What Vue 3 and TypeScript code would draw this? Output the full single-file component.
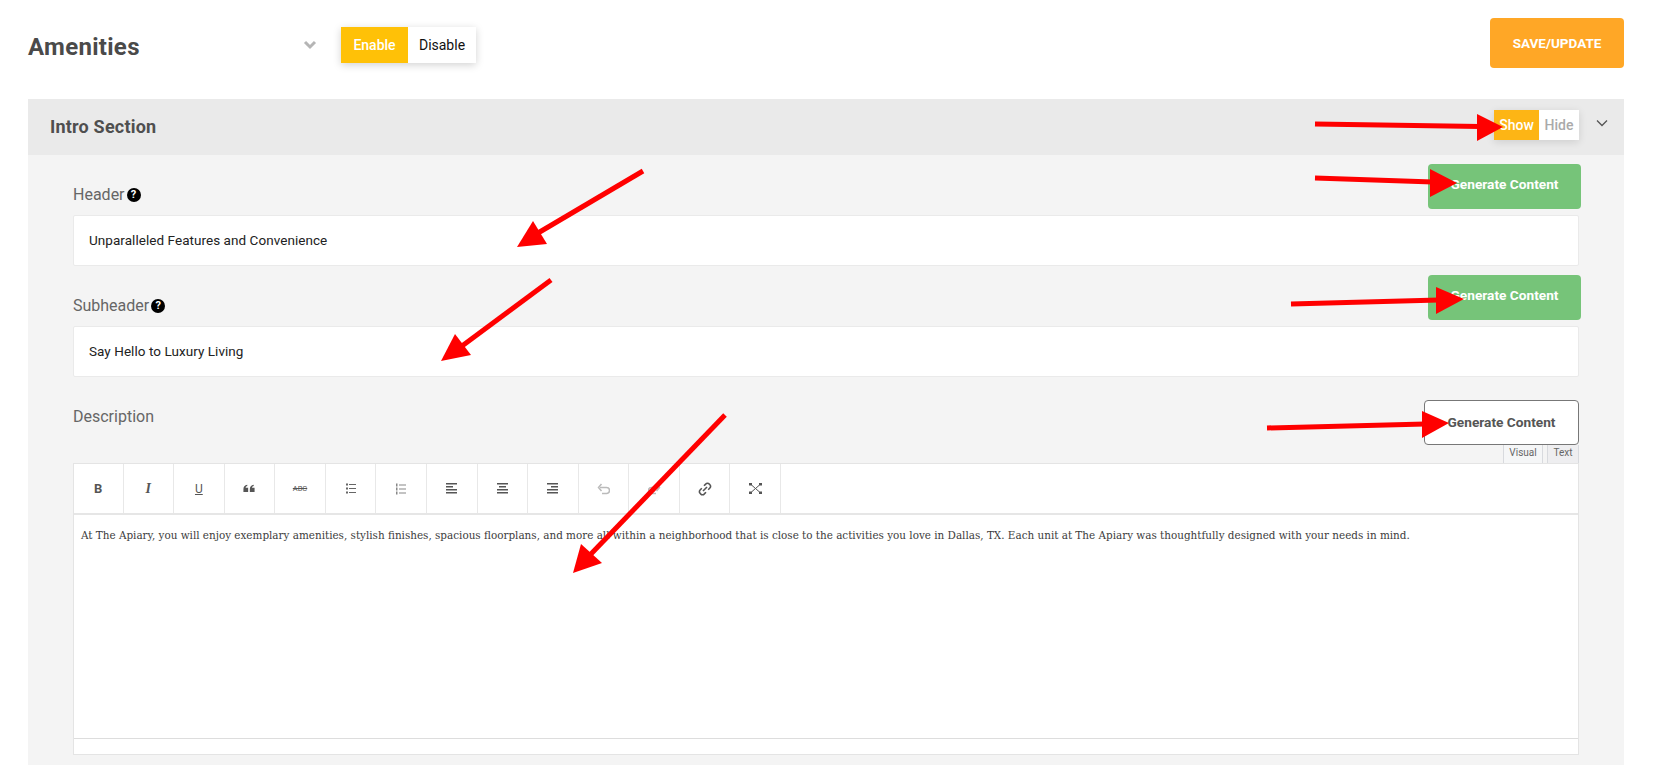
<template>
  <div class="page">
    <div class="topbar">
      <h1 class="title">Amenities</h1>
      <svg class="title-chevron" width="14" height="10" viewBox="0 0 14 10">
        <path d="M2 2l5 5 5-5" fill="none" stroke="#b5b5b5" stroke-width="3" />
      </svg>
      <div class="switch">
        <span class="switch-on">Enable</span>
        <span class="switch-off">Disable</span>
      </div>
      <button class="save-btn">SAVE/UPDATE</button>
    </div>

    <section class="panel">
      <header class="panel-head">
        <h2 class="panel-title">Intro Section</h2>
        <div class="show-hide">
          <span class="show">Show</span>
          <span class="hide">Hide</span>
        </div>
        <svg class="panel-chevron" width="12" height="8" viewBox="0 0 12 8">
          <path d="M1 1.5l5 5 5-5" fill="none" stroke="#555" stroke-width="1.3" />
        </svg>
      </header>

      <div class="panel-body">
        <div class="field-row">
          <label class="field-label">Header <span class="help">?</span></label>
          <button class="gen-btn">Generate Content</button>
        </div>
        <div class="text-input">Unparalleled Features and Convenience</div>

        <div class="field-row second">
          <label class="field-label">Subheader <span class="help">?</span></label>
          <button class="gen-btn">Generate Content</button>
        </div>
        <div class="text-input">Say Hello to Luxury Living</div>

        <div class="field-row third">
          <label class="field-label desc">Description</label>
          <button class="gen-btn outline">Generate Content</button>
        </div>
        <div class="tabs">
          <span class="tab visual">Visual</span>
          <span class="tab text">Text</span>
        </div>

        <div class="editor">
          <div class="toolbar">
            <span class="tool"><span class="t-bold">B</span></span>
            <span class="tool"><span class="t-italic">I</span></span>
            <span class="tool"><span class="t-under">U</span></span>
            <span class="tool">
              <svg width="12" height="9" viewBox="0 0 14 10"><path d="M0.500 9V5.500C0.500 3 2 1 5 0.500V2.200C3.800 2.500 3.200 3.200 3.100 4H6V9ZM8 9V5.500C8 3 9.500 1 12.500 0.500V2.200C11.300 2.500 10.700 3.200 10.600 4H13.500V9Z" fill="#555" /></svg>
            </span>
            <span class="tool"><span class="t-strike">ABC</span></span>
            <span class="tool">
              <svg width="10" height="11" viewBox="0 0 10 11" fill="#666"><rect y="0.500" width="2" height="2" /><rect y="4.500" width="2" height="2" /><rect y="8.500" width="2" height="2" /><rect x="3" y="1" width="7" height="1" /><rect x="3" y="5" width="7" height="1" /><rect x="3" y="9" width="7" height="1" /></svg>
            </span>
            <span class="tool">
              <svg width="10" height="12" viewBox="0 0 10 12" fill="#888"><rect y="0.500" width="1.500" height="3" /><rect y="4.500" width="1.500" height="3" /><rect y="8.500" width="1.500" height="3" /><rect x="3" y="1.500" width="7" height="1" /><rect x="3" y="5.500" width="7" height="1" /><rect x="3" y="9.500" width="7" height="1" /></svg>
            </span>
            <span class="tool">
              <svg width="11" height="11" viewBox="0 0 11 11" fill="#555"><rect width="11" height="1.500" /><rect y="3" width="7" height="1.500" /><rect y="6" width="11" height="1.500" /><rect y="9" width="11" height="1.500" /></svg>
            </span>
            <span class="tool">
              <svg width="11" height="11" viewBox="0 0 11 11" fill="#555"><rect width="11" height="1.500" /><rect x="2" y="3" width="7" height="1.500" /><rect y="6" width="11" height="1.500" /><rect y="9" width="11" height="1.500" /></svg>
            </span>
            <span class="tool">
              <svg width="11" height="11" viewBox="0 0 11 11" fill="#555"><rect width="11" height="1.500" /><rect x="4" y="3" width="7" height="1.500" /><rect y="6" width="11" height="1.500" /><rect y="9" width="11" height="1.500" /></svg>
            </span>
            <span class="tool">
              <svg width="13" height="12" viewBox="0 0 13 12" fill="none" stroke="#bbb" stroke-width="1.500"><path d="M3 4.500h6.500a2.800 2.800 0 0 1 0 6H5" /><path d="M4.500 1L1.500 4.500 4.500 8" /></svg>
            </span>
            <span class="tool">
              <svg width="13" height="12" viewBox="0 0 13 12" fill="none" stroke="#bbb" stroke-width="1.500"><path d="M10 4.500H3.500a2.800 2.800 0 0 0 0 6H8" /><path d="M8.500 1l3 3.500-3 3.500" /></svg>
            </span>
            <span class="tool">
              <svg width="14" height="14" viewBox="0 0 14 14" fill="none" stroke="#555" stroke-width="1.600"><path d="M6 3.800l1.700-1.700a2.300 2.300 0 0 1 3.600 0l.6.600a2.300 2.300 0 0 1 0 3.300L10.200 7.700" /><path d="M8 10.200l-1.700 1.700a2.300 2.300 0 0 1-3.600 0l-.6-.6a2.300 2.300 0 0 1 0-3.300L3.800 6.300" /><path d="M5 9l4-4" /></svg>
            </span>
            <span class="tool">
              <svg width="13" height="11" viewBox="0 0 13 11" fill="#555"><rect width="3" height="2.500" /><rect x="10" width="3" height="2.500" /><rect y="8.500" width="3" height="2.500" /><rect x="10" y="8.500" width="3" height="2.500" /><path d="M2.500 2l8 7M10.500 2l-8 7" stroke="#555" stroke-width="1" /></svg>
            </span>
          </div>
          <div class="editor-content">
            At The Apiary, you will enjoy exemplary amenities, stylish finishes, spacious floorplans, and more all within a neighborhood that is close to the activities you love in Dallas, TX. Each unit at The Apiary was thoughtfully designed with your needs in mind.
          </div>
          <div class="status-bar"></div>
        </div>
      </div>
    </section>

    <!-- red annotation arrows drawn over the screenshot -->
    <svg class="arrows" width="1654" height="765" viewBox="0 0 1654 765">
      <g v-for="(a, i) in arrows" :key="i">
        <line :x1="a.x1" :y1="a.y1" :x2="a.x2" :y2="a.y2" stroke="#ff0000" stroke-width="5" />
        <polygon :points="a.head" fill="#ff0000" />
      </g>
    </svg>
  </div>
</template>

<script setup lang="ts">
interface Arrow {
  x1: number
  y1: number
  x2: number
  y2: number
  head: string
}

const arrows: Arrow[] = [
  { x1: 1315, y1: 124, x2: 1480, y2: 126.5, head: '1477,114 1503,127 1477,141' },
  { x1: 1315, y1: 178, x2: 1433, y2: 182, head: '1430,169 1457,183 1430,197' },
  { x1: 1291, y1: 304, x2: 1439, y2: 300, head: '1436,287 1464,299 1436,314' },
  { x1: 1267, y1: 428, x2: 1425, y2: 424, head: '1422,411 1449,423 1422,438' },
  { x1: 643, y1: 171, x2: 538, y2: 233, head: '533,221 517,247 547,244' },
  { x1: 551, y1: 280, x2: 462, y2: 346, head: '455,334 441,361 471,355' },
  { x1: 725, y1: 415, x2: 590, y2: 555, head: '581,544 573,573 602,563' }
]
</script>

<style>
body {
  margin: 0;
  background: #fff;
  overflow: hidden;
}
</style>

<style scoped>
.page {
  position: relative;
  box-sizing: border-box;
  height: 765px;
  overflow: hidden;
  padding: 18px 30px 0 28px;
  font-family: Roboto, "Liberation Sans", sans-serif;
}

.topbar {
  display: flex;
  align-items: center;
  height: 50px;
  margin-bottom: 31px;
}
.title {
  width: 275px;
  margin: 8px 0 0;
  font-size: 24px;
  font-weight: 700;
  letter-spacing: 0.3px;
  color: #4a4a4a;
}
.title-chevron {
  margin-right: 24px;
  margin-top: 3px;
}
.switch {
  display: flex;
  height: 36px;
  margin-top: 4px;
  background: #fff;
  box-shadow: 0 2px 8px rgba(0, 0, 0, 0.18);
  font-size: 14px;
  line-height: 36px;
}
.switch-on {
  width: 67px;
  background: #ffc107;
  color: #fff;
  font-weight: 500;
  text-align: center;
}
.switch-off {
  width: 68px;
  color: #111;
  text-align: center;
}
.save-btn {
  width: 134px;
  height: 50px;
  margin-left: auto;
  border: 0;
  border-radius: 4px;
  background: #ffa726;
  color: #fff;
  font: 700 13.500px Roboto, sans-serif;
}

.panel {
  background: #f4f4f4;
}
.panel-head {
  display: flex;
  align-items: center;
  height: 56px;
  padding: 0 16px 0 22px;
  background: #eaeaea;
}
.panel-title {
  margin: -2px auto 0 0;
  font-size: 18px;
  font-weight: 700;
  letter-spacing: 0.2px;
  color: #4f4f4f;
}
.show-hide {
  display: flex;
  height: 30px;
  margin-right: 17px;
  margin-top: -4px;
  background: #fff;
  box-shadow: 0 2px 8px rgba(0, 0, 0, 0.12);
  font-size: 14px;
  font-weight: 500;
  line-height: 30px;
  text-align: center;
}
.show {
  width: 45px;
  background: #fdb515;
  color: #fff;
}
.hide {
  width: 40px;
  color: #aaa;
}
.panel-chevron {
  margin-top: -8px;
}

.panel-body {
  padding: 9px 45px 11px;
}
.field-row {
  display: flex;
  align-items: flex-end;
  justify-content: space-between;
  height: 45px;
  margin-right: -2px;
  margin-bottom: 6px;
}
.field-row.second {
  margin-top: 9px;
}
.field-row.third {
  margin-top: 23px;
  margin-right: 0;
  margin-bottom: 0;
}
.field-label {
  display: flex;
  align-items: center;
  gap: 2px;
  margin-bottom: 5px;
  font-size: 16px;
  color: #666;
}
.field-label.desc {
  margin-bottom: 19px;
}
.help {
  display: inline-block;
  width: 14px;
  height: 14px;
  border-radius: 50%;
  background: #000;
  color: #fff;
  font-size: 11px;
  font-weight: 700;
  line-height: 14px;
  text-align: center;
}
.gen-btn {
  width: 153px;
  height: 45px;
  padding-bottom: 7px;
  border: 0;
  border-radius: 4px;
  background: #76c479;
  color: #fff;
  font: 700 13.700px Roboto, sans-serif;
}
.gen-btn.outline {
  width: 155px;
  padding-bottom: 3px;
  border: 1px solid #777;
  background: #fff;
  color: #555;
}
.text-input {
  box-sizing: border-box;
  height: 51px;
  padding-left: 15px;
  border: 1px solid #eaeaea;
  border-radius: 2px;
  background: #fff;
  color: #222;
  font-size: 13.500px;
  letter-spacing: 0.05px;
  line-height: 48px;
}

.tabs {
  display: flex;
  justify-content: flex-end;
  gap: 4px;
  height: 18px;
}
.tab {
  box-sizing: border-box;
  border: 1px solid #d8dade;
  border-width: 0 1px;
  font-size: 10px;
  line-height: 16px;
  color: #666;
  text-align: center;
}
.tab.visual {
  width: 40px;
  background: #f5f6f7;
}
.tab.text {
  width: 32px;
  background: #eeeef0;
}

.editor {
  height: 292px;
  display: flex;
  flex-direction: column;
  box-sizing: border-box;
  border: 1px solid #e4e4e4;
  background: #fff;
}
.toolbar {
  display: flex;
  flex: none;
  height: 51px;
  border-bottom: 2px solid #e6e6e6;
  box-sizing: border-box;
}
.tool {
  display: flex;
  align-items: center;
  justify-content: center;
  width: 50.580px;
  box-sizing: border-box;
  border-right: 1px solid #e8e8e8;
  color: #555;
}
.tool:first-child {
  width: 49.500px;
}
.t-bold {
  font-size: 13px;
  font-weight: 700;
}
.t-italic {
  font-family: "Liberation Serif", serif;
  font-size: 14px;
  font-weight: 700;
  font-style: italic;
}
.t-under {
  font-size: 12px;
  text-decoration: underline;
}
.t-strike {
  font-size: 7.500px;
  text-decoration: line-through;
}
.editor-content {
  flex: 1;
  padding: 12px 7px 0;
  font-family: "DejaVu Serif Condensed", "DejaVu Serif", serif;
  font-size: 11.570px;
  line-height: 16px;
  color: #3c3c3c;
}
.status-bar {
  flex: none;
  height: 15px;
  border-top: 1px solid #ddd;
}

.arrows {
  position: absolute;
  top: 0;
  left: 0;
  pointer-events: none;
}
</style>
